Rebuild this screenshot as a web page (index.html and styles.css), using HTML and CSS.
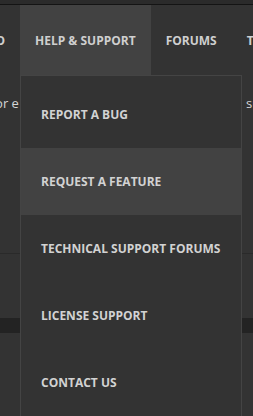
FILE: index.html
```html
<!DOCTYPE html>
<html lang="en">

<head>
    <meta charset="UTF-8">
    <meta name="viewport" content="width=device-width, initial-scale=1.0">
    <title>Help &amp; Support</title>
    <link rel="stylesheet" href="styles.css">
</head>

<body>
    <div class="topbar"></div>

    <nav class="main-nav">
        <ul class="nav-list">
            <li class="nav-item nav-item-cut"><a href="#">Demo</a></li>
            <li class="nav-item active">
                <a href="#">Help &amp; Support</a>
                <!-- Dropdown -->
                <ul class="dropdown">
                    <li><a href="#">Report a Bug</a></li>
                    <li class="hover"><a href="#">Request a Feature</a></li>
                    <li><a href="#">Technical Support Forums</a></li>
                    <li><a href="#">License Support</a></li>
                    <li><a href="#">Contact Us</a></li>
                </ul>
            </li>
            <li class="nav-item"><a href="#">Forums</a></li>
            <li class="nav-item"><a href="#">Tutorials</a></li>
        </ul>
    </nav>

    <div class="content">
        <p class="intro"><span class="intro-left">Search for answers or e</span><span class="intro-right">support</span></p>
        <div class="divider"></div>
        <div class="band"></div>
    </div>
</body>

</html>
```

FILE: styles.css
```css
/* Global Styles */
html,
body {
    min-height: 100%;
}

body {
    font-family: "Open Sans", Arial, sans-serif;
    margin: 0;
    padding: 0;
    min-height: 416px;
    background-color: #333333;
    color: #d6d6d6;
}

a {
    color: inherit;
    text-decoration: none;
}

ul {
    list-style: none;
    margin: 0;
    padding: 0;
}

.topbar {
    height: 4px;
    background-color: #2b2b2b;
    border-bottom: 1px solid #141414;
}

/* Main Navigation */
.main-nav {
    background-color: #333333;
    height: 70px;
    overflow: visible;
}

.nav-list {
    display: flex;
    height: 100%;
    max-width: 253px;
}

.nav-item {
    position: relative;
    display: flex;
    align-items: center;
    padding: 0 15px;
    font-size: 12px;
    font-weight: 700;
    text-transform: uppercase;
    color: #cfcfcf;
    white-space: nowrap;
    flex-shrink: 0;
}

.nav-item-cut {
    width: 20px;
    box-sizing: border-box;
    padding: 0 15px 0 0;
    justify-content: flex-end;
    overflow: hidden;
}

.nav-item.active {
    background-color: #424242;
}

/* Dropdown */
.dropdown {
    position: absolute;
    top: 70px;
    left: 0;
    width: 220px;
    padding-top: 5px;
    background-color: #333333;
    border: 1px solid #444444;
    z-index: 10;
}

.dropdown li {
    height: 67px;
    display: flex;
    align-items: center;
    padding-left: 20px;
    font-size: 12px;
    font-weight: 700;
    text-transform: uppercase;
    color: #d2d2d2;
}

.dropdown li.hover {
    background-color: #424242;
}

/* Page Content */
.content {
    overflow: hidden;
}

.intro {
    display: flex;
    margin: 0;
    padding-top: 19px;
    font-size: 13px;
    line-height: 18px;
    white-space: nowrap;
    overflow: hidden;
}

.intro-left {
    flex: 0 0 246px;
    text-indent: -124px;
}

.divider {
    margin-top: 141px;
    height: 1px;
    background-color: #2a2a2a;
}

.band {
    margin-top: 64px;
    height: 15px;
    background-color: #232323;
}
```
